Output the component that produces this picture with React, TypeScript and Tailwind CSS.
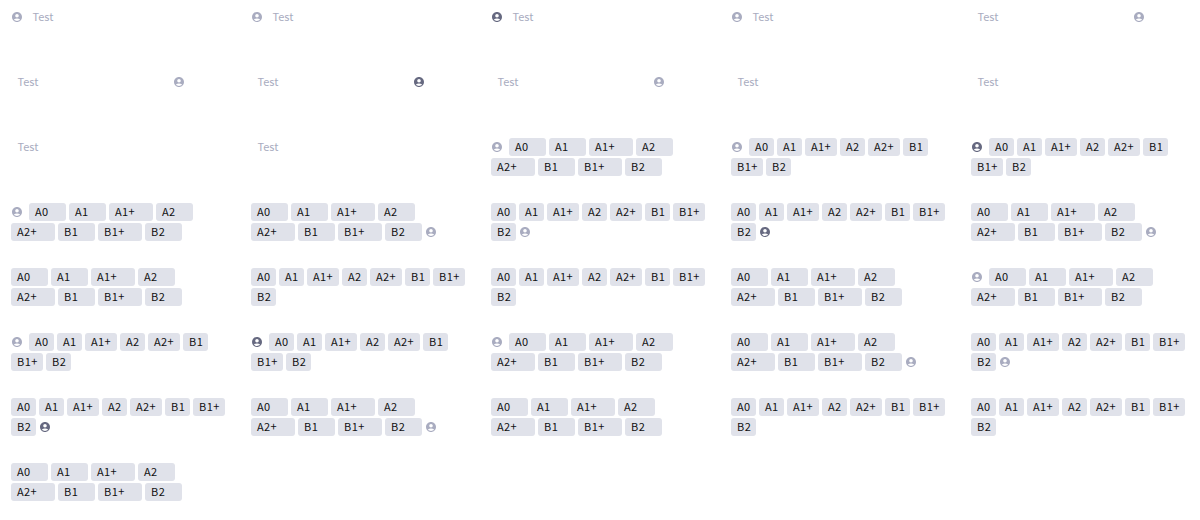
type Side = 'start' | 'end' | 'none';
type Cell = { kind: 'test' | 'wide' | 'tight'; icon: Side; dark?: boolean };

const LABELS = ['A0', 'A1', 'A1+', 'A2', 'A2+', 'B1', 'B1+', 'B2'];

const CELLS: Cell[] = [
  { kind: 'test', icon: 'start' },
  { kind: 'test', icon: 'start' },
  { kind: 'test', icon: 'start', dark: true },
  { kind: 'test', icon: 'start' },
  { kind: 'test', icon: 'end' },

  { kind: 'test', icon: 'end' },
  { kind: 'test', icon: 'end', dark: true },
  { kind: 'test', icon: 'end' },
  { kind: 'test', icon: 'none' },
  { kind: 'test', icon: 'none' },

  { kind: 'test', icon: 'none' },
  { kind: 'test', icon: 'none' },
  { kind: 'wide', icon: 'start' },
  { kind: 'tight', icon: 'start' },
  { kind: 'tight', icon: 'start', dark: true },

  { kind: 'wide', icon: 'start' },
  { kind: 'wide', icon: 'end' },
  { kind: 'tight', icon: 'end' },
  { kind: 'tight', icon: 'end', dark: true },
  { kind: 'wide', icon: 'end' },

  { kind: 'wide', icon: 'none' },
  { kind: 'tight', icon: 'none' },
  { kind: 'tight', icon: 'none' },
  { kind: 'wide', icon: 'none' },
  { kind: 'wide', icon: 'start' },

  { kind: 'tight', icon: 'start' },
  { kind: 'tight', icon: 'start', dark: true },
  { kind: 'wide', icon: 'start' },
  { kind: 'wide', icon: 'end' },
  { kind: 'tight', icon: 'end' },

  { kind: 'tight', icon: 'end', dark: true },
  { kind: 'wide', icon: 'end' },
  { kind: 'wide', icon: 'none' },
  { kind: 'tight', icon: 'none' },
  { kind: 'tight', icon: 'none' },

  { kind: 'wide', icon: 'none' },
];

function AccountIcon({ dark }: { dark?: boolean }) {
  return (
    <svg
      viewBox="0 0 24 24"
      className={`size-3 shrink-0 ${dark ? 'fill-[#666980]' : 'fill-[#a9acc0]'}`}
    >
      <path d="M12 2C6.48 2 2 6.48 2 12s4.48 10 10 10 10-4.48 10-10S17.52 2 12 2zm0 4c1.93 0 3.5 1.57 3.5 3.5S13.93 13 12 13s-3.5-1.57-3.5-3.5S10.07 6 12 6zm0 14c-2.03 0-4.43-.82-6.14-2.88C7.55 15.8 9.68 15 12 15s4.45.8 6.14 2.12C16.43 19.18 14.03 20 12 20z" />
    </svg>
  );
}

function Tag({ label, wide }: { label: string; wide: boolean }) {
  const long = label.length > 2;
  const width = wide ? (long ? 'w-[44px]' : 'w-[37px]') : long ? 'w-[32px]' : 'w-[25px]';
  return (
    <span
      className={`${width} h-[18px] shrink-0 rounded-[3px] bg-[#e0e2ea] pl-1.5 text-[11px] leading-[16px] tracking-[0.4px] whitespace-nowrap text-[#111111]`}
    >
      {label}
    </span>
  );
}

function TestField({ icon, dark }: Cell) {
  return (
    <div className="flex h-[18px] w-[174px] items-center">
      {icon === 'start' && <AccountIcon dark={dark} />}
      <span
        className={`h-[18px] grow text-[11px] leading-[16px] text-[#a9acc0] ${icon === 'start' ? 'pl-[9.4px]' : 'pl-[6.4px]'}`}
      >
        Test
      </span>
      {icon === 'end' && <AccountIcon dark={dark} />}
    </div>
  );
}

function TagField({ kind, icon, dark }: Cell) {
  const wide = kind === 'wide';
  const split = wide ? 4 : icon === 'start' ? 6 : 7;
  return (
    <div className="flex flex-col gap-0.5">
      <div className="flex items-center gap-[3px]">
        {icon === 'start' && (
          <span className="mr-[3px]">
            <AccountIcon dark={dark} />
          </span>
        )}
        {LABELS.slice(0, split).map((label) => (
          <Tag key={label} label={label} wide={wide} />
        ))}
      </div>
      <div className="flex items-center gap-[3px]">
        {LABELS.slice(split).map((label) => (
          <Tag key={label} label={label} wide={wide} />
        ))}
        {icon === 'end' && <AccountIcon dark={dark} />}
      </div>
    </div>
  );
}

export default function App() {
  return (
    <main className="grid h-[520px] w-[1200px] auto-rows-[65px] grid-cols-5 overflow-hidden bg-white font-['Noto_Sans_CJK_SC',sans-serif] antialiased">
      {CELLS.map((cell, i) => (
        <div key={i} className="pt-2 pl-[11px]">
          {cell.kind === 'test' ? <TestField {...cell} /> : <TagField {...cell} />}
        </div>
      ))}
    </main>
  );
}
